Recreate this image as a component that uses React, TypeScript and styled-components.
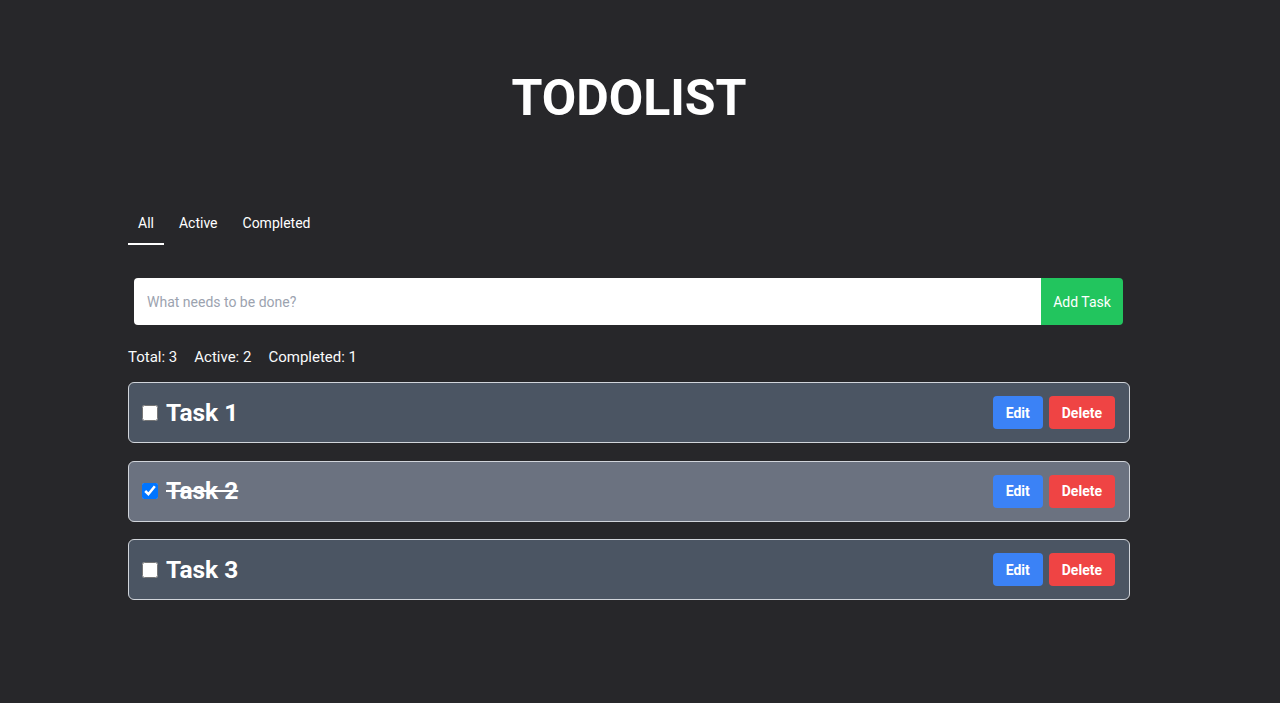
import React, { useState } from "react";
import styled, { createGlobalStyle } from "styled-components";

const GlobalStyle = createGlobalStyle`
  html, body {
    margin: 0;
    padding: 0;
    background: #27272a;
    font-family: Roboto, "Liberation Sans", Arial, sans-serif;
    color: #ffffff;
  }
  * {
    box-sizing: border-box;
  }
`;

const Page = styled.div`
  height: 703px;
  overflow: hidden;
  padding: 74px 150px 0 128px;
`;

const Container = styled.div`
  max-width: 1002px;
`;

const Title = styled.h1`
  margin: 0;
  font-size: 50px;
  line-height: 48px;
  font-weight: 700;
  text-align: center;
`;

const Tabs = styled.div`
  display: flex;
  gap: 5px;
  margin-top: 83px;
`;

const Tab = styled.button<{ $active?: boolean }>`
  background: none;
  border: none;
  border-bottom: 2px solid ${(p) => (p.$active ? "#ffffff" : "transparent")};
  color: #ffffff;
  font-family: inherit;
  font-size: 14px;
  font-weight: 400;
  line-height: 20px;
  padding: 8px 10px 10px;
  cursor: pointer;
`;

const Form = styled.form`
  display: flex;
  margin: 33px 7px 0 6px;
  height: 47px;
`;

const Input = styled.input`
  flex: 1;
  border: none;
  outline: none;
  border-radius: 4px 0 0 4px;
  padding: 0 13px;
  font-family: inherit;
  font-size: 14px;
  color: #111827;
  background: #ffffff;

  &::placeholder {
    color: #9ca3af;
  }
`;

const AddButton = styled.button`
  width: 82px;
  border: none;
  border-radius: 0 4px 4px 0;
  background: #22c55e;
  color: #ffffff;
  font-family: inherit;
  font-size: 14px;
  font-weight: 400;
  cursor: pointer;
`;

const Stats = styled.div`
  display: flex;
  gap: 17px;
  margin-top: 22px;
  font-size: 15px;
  line-height: 20px;
  color: #f9fafb;
`;

const List = styled.ul`
  list-style: none;
  margin: 15px 0 0;
  padding: 0;
  display: flex;
  flex-direction: column;
  gap: 17.5px;
`;

const Card = styled.li<{ $done?: boolean }>`
  display: flex;
  align-items: center;
  height: 61px;
  padding: 0 14px 0 13px;
  border: 1px solid #d1d5db;
  border-radius: 6px;
  background: ${(p) => (p.$done ? "#6b7280" : "#4b5563")};
`;

const Check = styled.input`
  width: 16px;
  height: 16px;
  margin: 0 8px 0 0;
  accent-color: #0075ff;
`;

const TaskName = styled.span<{ $done?: boolean }>`
  flex: 1;
  font-size: 24.5px;
  font-weight: 700;
  line-height: 32px;
  text-decoration: ${(p) => (p.$done ? "line-through" : "none")};
`;

const ActionButton = styled.button<{ $variant: "edit" | "delete" }>`
  height: 33px;
  padding: 0 13px;
  margin-left: 6px;
  border: none;
  border-radius: 4px;
  background: ${(p) => (p.$variant === "edit" ? "#3b82f6" : "#ef4444")};
  color: #ffffff;
  font-family: inherit;
  font-size: 14px;
  font-weight: 700;
  cursor: pointer;
`;

type Todo = { id: number; text: string; done: boolean };

const App: React.FC = () => {
  const [todos, setTodos] = useState<Todo[]>([
    { id: 1, text: "Task 1", done: false },
    { id: 2, text: "Task 2", done: true },
    { id: 3, text: "Task 3", done: false },
  ]);
  const [filter, setFilter] = useState("All");

  const active = todos.filter((t) => !t.done).length;
  const completed = todos.length - active;

  const toggle = (id: number) =>
    setTodos((list) => list.map((t) => (t.id === id ? { ...t, done: !t.done } : t)));

  return (
    <Page>
      <GlobalStyle />
      <Container>
        <Title>TODOLIST</Title>
        <Tabs>
          {["All", "Active", "Completed"].map((f) => (
            <Tab key={f} $active={filter === f} onClick={() => setFilter(f)}>
              {f}
            </Tab>
          ))}
        </Tabs>
        <Form onSubmit={(e) => e.preventDefault()}>
          <Input placeholder="What needs to be done?" />
          <AddButton type="submit">Add Task</AddButton>
        </Form>
        <Stats>
          <span>Total: {todos.length}</span>
          <span>Active: {active}</span>
          <span>Completed: {completed}</span>
        </Stats>
        <List>
          {todos.map((t) => (
            <Card key={t.id} $done={t.done}>
              <Check type="checkbox" checked={t.done} onChange={() => toggle(t.id)} />
              <TaskName $done={t.done}>{t.text}</TaskName>
              <ActionButton $variant="edit">Edit</ActionButton>
              <ActionButton $variant="delete">Delete</ActionButton>
            </Card>
          ))}
        </List>
      </Container>
    </Page>
  );
};

export default App;
